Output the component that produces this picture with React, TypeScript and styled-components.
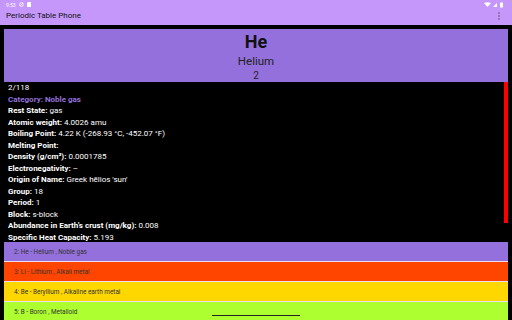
import React from "react";
import styled, { createGlobalStyle } from "styled-components";

const GlobalStyle = createGlobalStyle`
  html, body {
    margin: 0;
    padding: 0;
    background: #000000;
  }
  body {
    width: 512px;
    height: 320px;
    overflow: hidden;
    font-family: Roboto, "Liberation Sans", sans-serif;
  }
`;

const Screen = styled.div`
  width: 512px;
  height: 320px;
  display: flex;
  flex-direction: column;
  background: #000000;
  overflow: hidden;
`;

const AppBar = styled.header`
  height: 25px;
  background: #c597fb;
  display: flex;
  flex-direction: column;
  padding: 0 6px;
  box-sizing: border-box;
`;

const StatusRow = styled.div`
  height: 9px;
  display: flex;
  align-items: center;
  justify-content: space-between;
  font-size: 5px;
  color: #ffffff;
`;

const StatusLeft = styled.div`
  display: flex;
  align-items: center;
  gap: 3px;
`;

const TitleRow = styled.div`
  flex: 1;
  display: flex;
  align-items: center;
  justify-content: space-between;
  padding-bottom: 3px;
`;

const Title = styled.span`
  font-size: 8px;
  color: #111111;
`;

const Body = styled.main`
  flex: 1;
  display: flex;
  flex-direction: column;
  padding: 4px 4px 0;
  min-height: 0;
`;

const ElementHeader = styled.section`
  height: 53px;
  background: #9370db;
  display: flex;
  flex-direction: column;
  align-items: center;
  justify-content: center;
  padding-top: 2px;
  box-sizing: border-box;
  color: #111111;
  flex-shrink: 0;
`;

const Symbol = styled.div`
  font-size: 18px;
  font-weight: 700;
  line-height: 22px;
`;

const Name = styled.div`
  font-size: 11.5px;
  line-height: 16px;
  color: #222222;
`;

const Number = styled.div`
  font-size: 10px;
  line-height: 13px;
  color: #222222;
`;

const Details = styled.section`
  position: relative;
  height: 160px;
  flex-shrink: 0;
  padding: 0 0 0 4px;
  box-sizing: border-box;
  color: #ffffff;
  font-size: 8px;
`;

const ScrollBar = styled.div`
  position: absolute;
  right: 0;
  top: 0;
  width: 4px;
  height: 141px;
  background: #ff0000;
`;

const Line = styled.div<{ $accent?: boolean }>`
  height: 11.5px;
  line-height: 11.5px;
  white-space: nowrap;
  color: ${(p) => (p.$accent ? "#9370db" : "#ffffff")};
  font-weight: ${(p) => (p.$accent ? 700 : 400)};
`;

const Label = styled.b`
  font-weight: 700;
`;

const List = styled.section`
  position: relative;
  display: flex;
  flex-direction: column;
  gap: 1px;
  background: #e8e0f0;
`;

const Row = styled.div<{ $bg: string }>`
  height: 19px;
  background: ${(p) => p.$bg};
  display: flex;
  align-items: center;
  padding-left: 10px;
  font-size: 6.4px;
  color: #333333;
`;

const HScroll = styled.div`
  position: absolute;
  left: 208px;
  bottom: 5px;
  width: 88px;
  height: 1px;
  background: #222222;
`;

const details: { label: string; value: string }[] = [
  { label: "Rest State:", value: "gas" },
  { label: "Atomic weight:", value: "4.0026 amu" },
  { label: "Boiling Point:", value: "4.22 K (-268.93 °C, -452.07 °F)" },
  { label: "Melting Point:", value: "" },
  { label: "Density (g/cm³):", value: "0.0001785" },
  { label: "Electronegativity:", value: "–" },
  { label: "Origin of Name:", value: "Greek hēlios 'sun'" },
  { label: "Group:", value: "18" },
  { label: "Period:", value: "1" },
  { label: "Block:", value: "s-block" },
  { label: "Abundance in Earth's crust (mg/kg):", value: "0.008" },
  { label: "Specific Heat Capacity:", value: "5.193" },
];

const rows = [
  { text: "2: He - Helium , Noble gas", bg: "#9370db" },
  { text: "3: Li - Lithium , Alkali metal", bg: "#ff4500" },
  { text: "4: Be - Beryllium , Alkaline earth metal", bg: "#ffd700" },
  { text: "5: B - Boron , Metalloid", bg: "#adff2f" },
];

const StatusIcons = () => (
  <svg width="22" height="6" viewBox="0 0 22 6">
    <path d="M0 1 Q3.5 -0.5 7 1 L3.5 5 Z" fill="#fff" />
    <path d="M9 5 L13 1 L13 5 Z" fill="#fff" />
    <rect x="16" y="0.5" width="3" height="5" rx="0.5" fill="#fff" />
  </svg>
);

const App: React.FC = () => {
  return (
    <>
      <GlobalStyle />
      <Screen>
        <AppBar>
          <StatusRow>
            <StatusLeft>
              <span>9:53</span>
              <svg width="5" height="5" viewBox="0 0 10 10">
                <circle cx="5" cy="5" r="3.8" fill="none" stroke="#fff" strokeWidth="1.6" />
                <path d="M2.5 7.5 L7.5 2.5" stroke="#fff" strokeWidth="1.6" />
              </svg>
              <svg width="4" height="5" viewBox="0 0 8 10">
                <path d="M2 0 H8 V10 H0 V2 Z" fill="#fff" />
              </svg>
            </StatusLeft>
            <StatusIcons />
          </StatusRow>
          <TitleRow>
            <Title>Periodic Table Phone</Title>
            <svg width="4" height="8" viewBox="0 0 4 8" style={{ marginRight: 5 }}>
              <circle cx="2" cy="1" r="0.8" fill="#555" />
              <circle cx="2" cy="4" r="0.8" fill="#555" />
              <circle cx="2" cy="7" r="0.8" fill="#555" />
            </svg>
          </TitleRow>
        </AppBar>
        <Body>
          <ElementHeader>
            <Symbol>He</Symbol>
            <Name>Helium</Name>
            <Number>2</Number>
          </ElementHeader>
          <Details>
            <ScrollBar />
            <Line>2/118</Line>
            <Line $accent>Category: Noble gas</Line>
            {details.map((d) => (
              <Line key={d.label}>
                <Label>{d.label}</Label> {d.value}
              </Line>
            ))}
          </Details>
          <List>
            {rows.map((r) => (
              <Row key={r.text} $bg={r.bg}>
                {r.text}
              </Row>
            ))}
            <HScroll />
          </List>
        </Body>
      </Screen>
    </>
  );
};

export default App;
